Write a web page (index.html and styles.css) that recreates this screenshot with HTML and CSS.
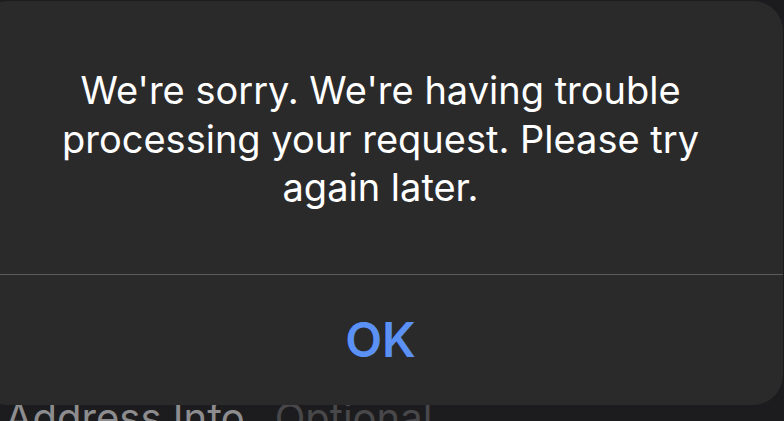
FILE: index.html
```html
<!DOCTYPE html>
<html>
<head>
  <title>Alert</title>
  <link rel="stylesheet" href="styles.css">
</head>
<body>
  <div class="form">
    <div class="field-row">
      <span class="field-label">Address Info</span>
      <span class="field-hint">Optional</span>
    </div>
  </div>

  <div class="alert">
    <p class="alert-message">We're sorry. We're having trouble<br>processing your request. Please try<br>again later.</p>
    <div class="alert-actions">
      <button class="alert-button">OK</button>
    </div>
  </div>
</body>
</html>
```

FILE: styles.css
```css
html, body {
  margin: 0;
  height: 100%;
  overflow: hidden;
}

body {
  position: relative;
  background-color: #1c1c1e;
  font-family: 'Inter', 'Liberation Sans', sans-serif;
}

/* page content behind the alert */
.form {
  padding: 393px 0 0 5px;
}

.field-row {
  display: flex;
  gap: 30px;
  font-size: 40px;
  white-space: nowrap;
}

.field-label {
  color: #8d8d8f;
}

.field-hint {
  color: #48484a;
}

/* the alert sits over the form */
.alert {
  position: absolute;
  top: 1px;
  left: -22px;
  width: 805px;
  height: 404px;
  display: flex;
  flex-direction: column;
  background-color: #2a2a2b;
  border-radius: 30px;
}

.alert-message {
  margin: 0;
  padding: 65px 0 62px;
  color: #fff;
  font-size: 38px;
  line-height: 48.5px;
  text-align: center;
  border-bottom: 1px solid #5c5c5e;
}

.alert-actions {
  flex: 1;
  display: flex;
  justify-content: center;
  align-items: center;
}

.alert-button {
  background: none;
  border: none;
  padding: 0;
  color: #5b91f5;
  font-family: inherit;
  font-size: 48px;
  font-weight: 600;
}
```
